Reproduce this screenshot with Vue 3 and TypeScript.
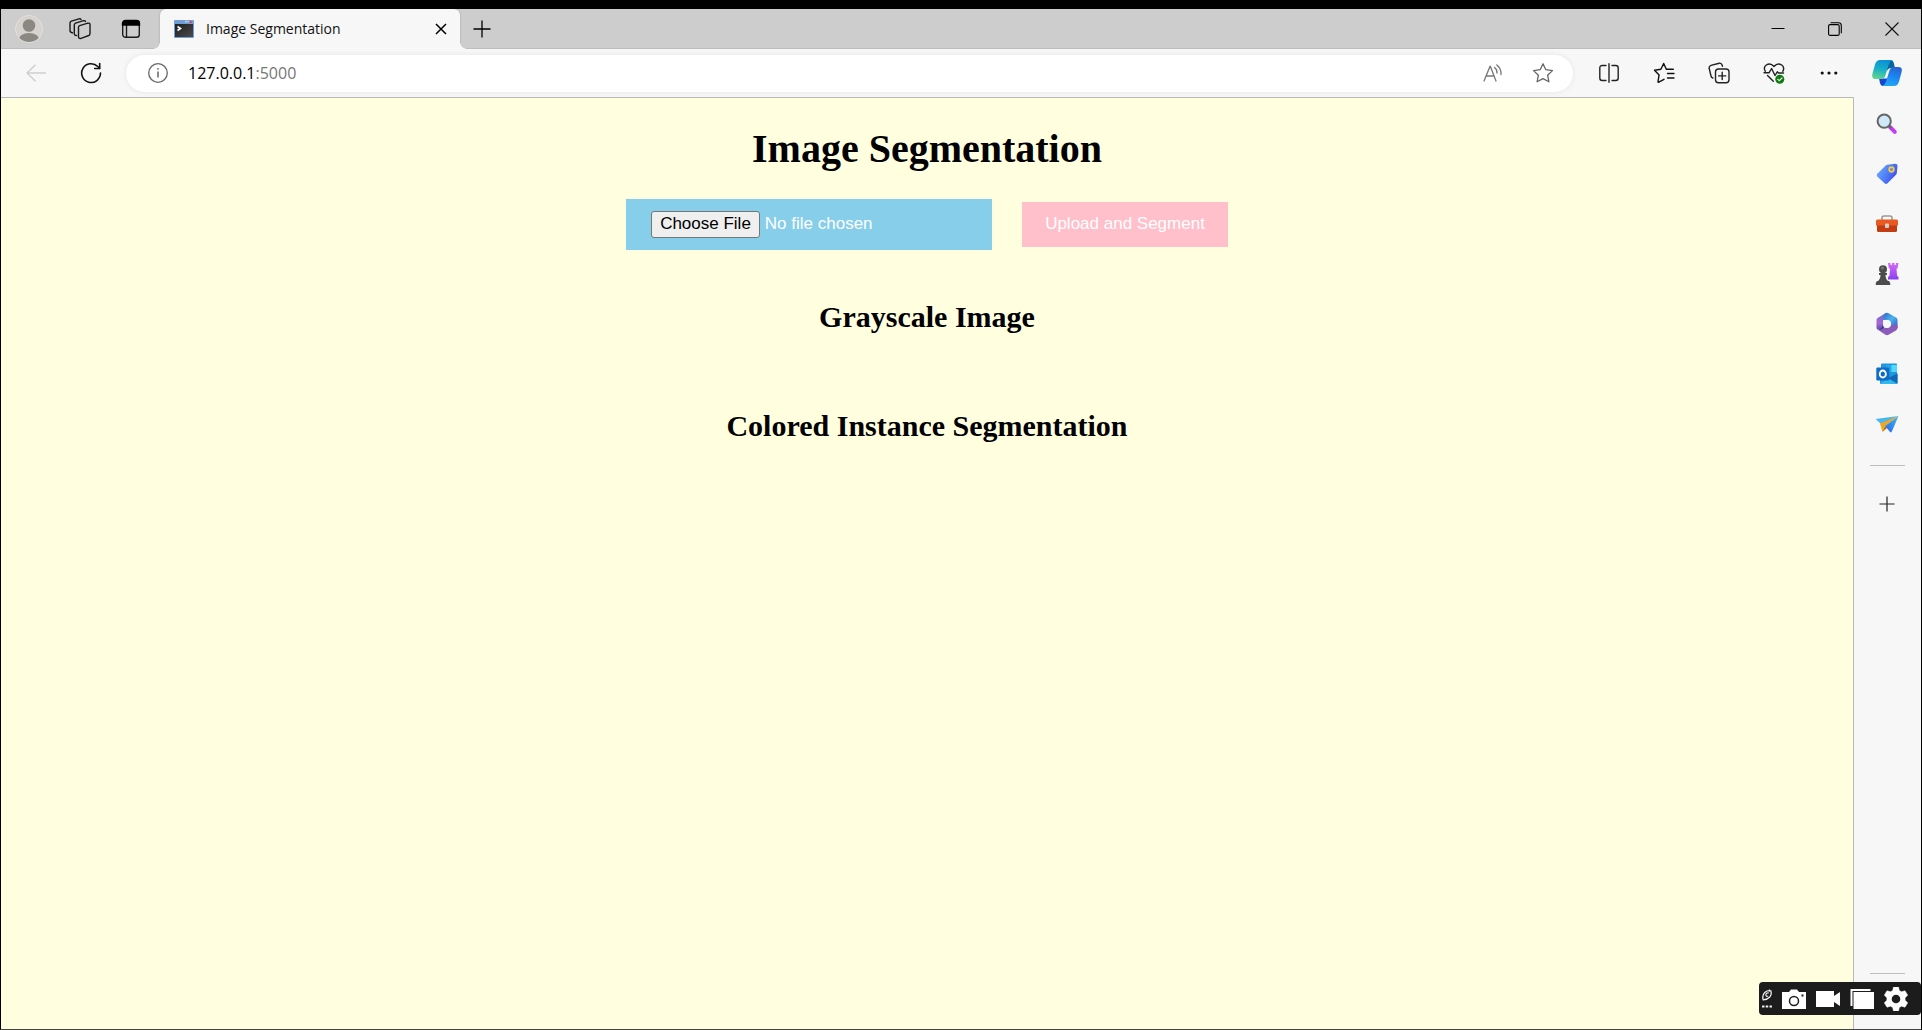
<script setup lang="ts">
import { ref } from 'vue'

const tabTitle = ref('Image Segmentation')
const host = ref('127.0.0.1')
const port = ref(':5000')
</script>

<template>
  <div class="window">
    <header class="strip">
      <button class="strip-btn" aria-label="Profile">
        <svg width="28" height="28" viewBox="0 0 28 28">
          <defs><clipPath id="avatar"><circle cx="14" cy="14" r="13" /></clipPath></defs>
          <circle cx="14" cy="14" r="13.5" fill="#d6d3cf" stroke="#e4e0dc" />
          <g fill="#8b8783" clip-path="url(#avatar)">
            <circle cx="14" cy="10.500" r="6.300" />
            <ellipse cx="14" cy="25" rx="10.500" ry="7" />
          </g>
        </svg>
      </button>
      <button class="strip-btn" aria-label="Workspaces">
        <svg width="22" height="22" viewBox="0 0 22 22" fill="none" stroke="#1b1b1b" stroke-width="1.400" stroke-linejoin="round" stroke-linecap="round">
          <path d="M9.500 9.200 Q9.500 8 10.700 7.600 L18.800 5.200 Q21 4.700 21 6.800 V15.500 Q21 17 19.800 17.500 L12 20.300 Q9.500 21 9.500 18.500Z" />
          <path d="M7.500 17.500 Q5.300 17.600 5.300 15.500 V7 Q5.300 5.700 6.500 5.200 L14.500 2.700 Q16 2.400 16.500 3.400" />
          <path d="M3.500 14.800 Q1 14.500 1 12.500 V5 Q1 3.700 2.300 3.100 L10 .9 Q11.500 .6 12 1.400" />
        </svg>
      </button>
      <button class="strip-btn" aria-label="Tab actions">
        <svg width="20" height="20" viewBox="0 0 20 20" fill="none" stroke="#1b1b1b" stroke-width="1.400">
          <rect x="1.700" y="1.700" width="16.600" height="16.600" rx="2.800" />
          <path d="M5.500 6V18" />
          <path d="M1.500 6V4.500a3 3 0 0 1 3-3h11a3 3 0 0 1 3 3V6z" fill="#000" stroke="#000" />
        </svg>
      </button>

      <div class="tab">
        <svg class="favicon" width="20" height="18" viewBox="0 0 20 18">
          <defs>
            <linearGradient id="term" x1="0" y1="0" x2="1" y2="1">
              <stop offset="0" stop-color="#1e1e1e" /><stop offset="1" stop-color="#4b4b4b" />
            </linearGradient>
          </defs>
          <rect width="20" height="18" rx="1" fill="#6f9ed6" />
          <rect x="1" y="4" width="18" height="13" fill="url(#term)" />
          <path d="M11 1.500h2M13.500 1.500h1.500" stroke="#b9d3f0" stroke-width="1.500" />
          <path d="M15.500 2h2.500" stroke="#e0524a" stroke-width="2" />
          <path d="M3.500 6.500L6.500 8.500L3.500 10.500" stroke="#fff" stroke-width="1.600" fill="none" />
        </svg>
        <span class="tab-title">{{ tabTitle }}</span>
        <button class="tab-close" aria-label="Close tab">
          <svg width="12" height="12" viewBox="0 0 12 12" stroke="#000" stroke-width="1.500"><path d="M1 1L11 11M11 1L1 11" /></svg>
        </button>
      </div>
      <button class="new-tab" aria-label="New tab">
        <svg width="18" height="18" viewBox="0 0 18 18" stroke="#000" stroke-width="1.300"><path d="M9 .5V17.500M.5 9H17.500" /></svg>
      </button>

      <div class="controls">
        <button aria-label="Minimize">
          <svg width="14" height="14" viewBox="0 0 14 14" stroke="#000"><path d="M.5 6.500H13.500" /></svg>
        </button>
        <button aria-label="Restore">
          <svg width="14" height="14" viewBox="0 0 14 14" fill="none" stroke="#000" stroke-width="1.100">
            <rect x=".6" y="2.600" width="10.600" height="10.800" rx="1.500" />
            <path d="M2.600 .7H10.500Q13.300 .7 13.300 3.500V11.200" />
          </svg>
        </button>
        <button aria-label="Close">
          <svg width="14" height="14" viewBox="0 0 14 14" stroke="#111" stroke-width="1.100"><path d="M.5 .5L13.500 13.500M13.500 .5L.5 13.500" /></svg>
        </button>
      </div>
    </header>

    <nav class="toolbar">
      <button class="tool" aria-label="Back" disabled>
        <svg width="20" height="18" viewBox="0 0 20 18" fill="none" stroke="#cfcfcf" stroke-width="1.500"><path d="M20 9H1M9.500 .7L1 9L9.500 17.300" /></svg>
      </button>
      <button class="tool" aria-label="Refresh">
        <svg width="22" height="22" viewBox="0 0 22 22" fill="none" stroke="#111" stroke-width="1.600" stroke-linecap="round" stroke-linejoin="round">
          <path d="M20.500 11A9.400 9.400 0 1 1 17.800 4.500L19.500 6.300" /><path d="M19.700 1.500V6.500H14.700" />
        </svg>
      </button>

      <div class="address">
        <button class="info" aria-label="View site information">
          <svg width="20" height="20" viewBox="0 0 20 20" fill="none" stroke="#666" stroke-width="1.300">
            <circle cx="10" cy="10" r="9.300" /><path d="M10 8.500V14.500" stroke-width="1.500" /><circle cx="10" cy="5.800" r=".9" fill="#666" stroke="none" />
          </svg>
        </button>
        <label class="url">
          <input v-model="host" class="host" type="text" aria-label="Address" /><span class="port">{{ port }}</span>
        </label>
        <button class="inner" aria-label="Read aloud">
          <svg width="20" height="18" viewBox="0 0 20 18" fill="none" stroke="#777" stroke-width="1.300" stroke-linecap="round">
            <path d="M1 17L7 2.500H7.400L13 17M3 12H11" />
            <path d="M11.500 3.500Q14.200 5.500 14 9" /><path d="M13.800 .9Q18.500 4.500 18 10.500" />
          </svg>
        </button>
        <button class="inner" aria-label="Add to favorites">
          <svg width="22" height="22" viewBox="0 0 22 22" fill="none" stroke="#666" stroke-width="1.300" stroke-linejoin="round">
            <path d="M11 1.800L13.800 7.700L20.500 8.600L15.600 13.200L16.900 19.800L11 16.600L5.100 19.800L6.400 13.200L1.500 8.600L8.200 7.700Z" />
          </svg>
        </button>
      </div>

      <button class="tool" aria-label="Split screen">
        <svg width="20" height="20" viewBox="0 0 20 20" fill="none" stroke="#222" stroke-width="1.400" stroke-linecap="round">
          <path d="M7 2.500H3.200Q.8 2.500 .8 5V15Q.8 17.500 3.200 17.500H7M13 2.500H16.800Q19.200 2.500 19.200 5V15Q19.200 17.500 16.800 17.500H13M10 .7V19.300" />
        </svg>
      </button>
      <button class="tool" aria-label="Favorites">
        <svg width="22" height="22" viewBox="0 0 22 22" fill="none" stroke="#111" stroke-width="1.400" stroke-linejoin="round" stroke-linecap="round">
          <path d="M20.300 7.200H13.300L10.700 1.500L7.900 7.200L1.500 8.200L6.100 12.900L5 19.600Q4.900 20.600 5.800 20.200L11 17.300" />
          <path d="M14.500 11.500H21M14.500 16H21" />
        </svg>
      </button>
      <button class="tool" aria-label="Collections">
        <svg width="22" height="22" viewBox="0 0 22 22" fill="none" stroke="#222" stroke-width="1.400" stroke-linecap="round">
          <path d="M4.800 16Q3.300 15.500 3 14L1.200 6.500Q.7 4.200 3 3.400L11.200 1.200Q13.500 .8 14.200 3.200L14.500 4.200" />
          <rect x="7.500" y="7" width="13.500" height="13.800" rx="3" /><path d="M14.200 10.300V17.500M10.600 13.900H17.800" />
        </svg>
      </button>
      <button class="tool" aria-label="Browser essentials">
        <svg width="22" height="22" viewBox="0 0 22 22" fill="none" stroke="#222" stroke-width="1.400" stroke-linejoin="round" stroke-linecap="round">
          <path d="M2.300 9.300Q0 5.500 3.300 3Q7.500 .6 11 4.500Q14.500 .6 18.700 3Q22 5.500 19.800 9.300" />
          <path d="M1 10.800H6L8.600 6.500L12 13.500L14.300 9.800L15.500 11H20.500" /><path d="M4.500 13.500L10.300 19.300" />
          <circle cx="16.800" cy="17.200" r="4.500" fill="#107c10" stroke="none" /><path d="M14.800 17.300L16.300 18.700L19 16" stroke="#fff" stroke-width="1.100" />
        </svg>
      </button>
      <button class="tool" aria-label="Settings and more">
        <svg width="18" height="4" viewBox="0 0 18 4" fill="#111"><circle cx="2.200" cy="2" r="1.600" /><circle cx="9" cy="2" r="1.600" /><circle cx="15.800" cy="2" r="1.600" /></svg>
      </button>
      <button class="copilot" aria-label="Copilot">
        <svg width="30" height="28" viewBox="0 0 30 28">
          <defs>
            <linearGradient id="cpA" x1=".6" y1="0" x2=".4" y2="1"><stop offset="0" stop-color="#0b8fd6" /><stop offset=".5" stop-color="#17b0c8" /><stop offset="1" stop-color="#5fd48c" /></linearGradient>
            <linearGradient id="cpB" x1=".7" y1="0" x2=".4" y2="1"><stop offset="0" stop-color="#2a62d0" /><stop offset=".5" stop-color="#1b86f0" /><stop offset="1" stop-color="#22a6f6" /></linearGradient>
          </defs>
          <path d="M7 19.500H15.800L14 24Q13 27 10.500 27Q8.500 26.800 8 24Z" fill="#1747d1" />
          <path d="M14 1H18.500Q21 1 21.800 4L23 9H18.500Q16.500 9 15 11.500Z" fill="#08649c" />
          <path d="M8 1H19.500Q17.500 2.500 16.700 5.500L13.300 16.800Q12.300 20 8.500 20H3.500Q-.8 20 .5 14.500L3 5.500Q4.300 1 8 1Z" fill="url(#cpA)" />
          <path d="M22 27H10.500Q13 26 14 22.500L17.500 11.500Q18.500 8 22 8H26.500Q31 8 29.500 13.500L27 22.500Q25.700 27 22 27Z" fill="url(#cpB)" />
        </svg>
      </button>
    </nav>

    <div class="body">
      <main class="page">
        <h1>Image Segmentation</h1>
        <form class="upload" @submit.prevent>
          <input class="file" type="file" aria-label="Image file" />
          <button class="submit" type="submit">Upload and Segment</button>
        </form>
        <h2>Grayscale Image</h2>
        <h2>Colored Instance Segmentation</h2>
      </main>

      <aside class="sidebar">
        <button aria-label="Search">
          <svg width="22" height="22" viewBox="0 0 22 22">
            <path d="M14 14L18.800 18.800" stroke="#c23cf4" stroke-width="4" stroke-linecap="round" />
            <path d="M12.500 12.500L15 15" stroke="#666" stroke-width="2.500" />
            <circle cx="8.200" cy="8.200" r="6.600" fill="#cfe9fb" stroke="#666" stroke-width="2" />
          </svg>
        </button>
        <button aria-label="Shopping">
          <svg width="22" height="22" viewBox="0 0 22 22">
            <defs><linearGradient id="tag" x1="0" y1=".3" x2="1" y2=".8"><stop offset="0" stop-color="#6ea6fb" /><stop offset=".5" stop-color="#4c7df6" /><stop offset="1" stop-color="#3f3bf0" /></linearGradient></defs>
            <path d="M11.500 1.700L19 .8Q21.500 .6 21.500 3L20.800 10Q20.700 11 20 11.700L11.500 20.300Q10 21.700 8.500 20.300L1.300 13.500Q0 12 1.300 10.700L9.700 2.500Q10.500 1.800 11.500 1.700Z" fill="url(#tag)" />
            <circle cx="15.500" cy="6.500" r="2.300" fill="#7b83c9" stroke="#f7ce45" stroke-width="1.700" />
          </svg>
        </button>
        <button aria-label="Tools">
          <svg width="24" height="20" viewBox="0 0 24 20">
            <path d="M7 6V4Q7 2 9 2H15Q17 2 17 4V6" fill="none" stroke="#999" stroke-width="1.600" />
            <rect x="1" y="5.500" width="22" height="6.500" rx="1.500" fill="#e85a20" />
            <path d="M2 11.500H22V16.500Q22 18 20.500 18H3.500Q2 18 2 16.500Z" fill="#c43d12" />
            <rect x="10" y="9.500" width="4" height="4.500" rx="1" fill="#d0d0d0" />
          </svg>
        </button>
        <button aria-label="Games">
          <svg width="24" height="24" viewBox="0 0 24 24">
            <defs><linearGradient id="rook" x1="0" y1="0" x2="0" y2="1"><stop offset="0" stop-color="#d76bf8" /><stop offset="1" stop-color="#8a3ff0" /></linearGradient></defs>
            <path d="M13 1H15.500V3H17V1H19.500V3H21V1H23.500L22.500 6.500H21.500L22 13.500L23.500 15V17.500H13V15L14.500 13.500L15 6.500H13.800Z" fill="url(#rook)" />
            <g fill="#4c4c4c"><circle cx="8" cy="7.300" r="4" /><path d="M4 11H12V13H10.500Q10.500 17 13.500 19.500H2.500Q5.500 17 5.500 13H4Z" /><path d="M2 19H14L15.200 21V23H.8V21Z" /></g>
            <circle cx="7.500" cy="6" r="1.500" fill="#777" />
          </svg>
        </button>
        <button aria-label="Microsoft 365">
          <svg width="22" height="24" viewBox="0 0 22 24">
            <defs>
              <linearGradient id="mA" x1="0" y1="0" x2="0" y2="1"><stop offset="0" stop-color="#696bd2" /><stop offset=".6" stop-color="#a868cf" /><stop offset="1" stop-color="#5f4bb0" /></linearGradient>
              <linearGradient id="mB" x1="0" y1="0" x2="1" y2="1"><stop offset="0" stop-color="#2c66c4" /><stop offset=".5" stop-color="#4cb4ee" /><stop offset="1" stop-color="#2e55c6" /></linearGradient>
              <linearGradient id="mC" x1="0" y1="1" x2="1" y2="0"><stop offset="0" stop-color="#8f5fc0" /><stop offset="1" stop-color="#8a58b4" /></linearGradient>
            </defs>
            <path d="M11 1L7 8L7.500 13V18L1.500 17.500Q.5 17 .5 15.500V8Q.5 6.500 2 5.800L9 1.500Z" fill="url(#mA)" />
            <path d="M9 1.400Q11 .2 13 1.400L20 5.600Q21.500 6.500 21.500 8V16L15 13Q15 8 11 8H7Q7 3 9 1.400Z" fill="url(#mB)" />
            <path d="M1.500 17.500Q5 19 8 15.500H12L15 13L21.500 13V16Q21.500 17.500 20 18.400L13 22.600Q11 23.800 9 22.600Z" fill="url(#mC)" />
            <path d="M2 17.500Q6 17.500 7 12L8 15.500Q5 19 2 17.500Z" fill="#2b3c8f" />
            <circle cx="11" cy="12" r="4" fill="#f7f7f7" />
          </svg>
        </button>
        <button aria-label="Outlook">
          <svg width="22" height="22" viewBox="0 0 22 22">
            <rect x="5" y=".5" width="16" height="12" rx="1" fill="#1f96de" /><path d="M10 2H16V9H10Z" fill="#28a8ea" /><path d="M15.500 2H21V9H15.500Z" fill="#50d9ff" />
            <path d="M4 10H14L21.500 11V20Q21.500 21 20.500 21H5Q4 21 4 20Z" fill="#1a9ae2" /><path d="M21.500 10.500V20.500L12 15Z" fill="#1268b4" /><path d="M4 20.500L12 15.500L21 21H5Z" fill="#31b9f0" />
            <rect x=".3" y="4.500" width="13" height="13" rx="1.200" fill="#0f6cc4" /><ellipse cx="6.800" cy="11" rx="3.100" ry="3.500" fill="none" stroke="#fff" stroke-width="1.800" />
          </svg>
        </button>
        <button aria-label="Drop">
          <svg width="24" height="18" viewBox="0 0 24 18">
            <defs><linearGradient id="drop" x1="1" y1="0" x2="0" y2="1"><stop offset="0" stop-color="#45b6f2" /><stop offset="1" stop-color="#2368e8" /></linearGradient></defs>
            <path d="M.5 4L23.500 1L6 9Z" fill="#46b7f0" /><path d="M5 8.500L23.500 1L10 11L7.500 17Z" fill="#f3a51c" /><path d="M10 11L7.500 17L12 13Z" fill="#b96c0e" />
            <path d="M23.500 1L10 11L15.500 17.500Q16.500 17.500 17.500 15Z" fill="url(#drop)" />
          </svg>
        </button>
        <hr class="rule" />
        <button aria-label="Customize">
          <svg width="16" height="16" viewBox="0 0 16 16" stroke="#222" stroke-width="1.200"><path d="M8 .5V15.500M.5 8H15.500" /></svg>
        </button>
        <hr class="rule last" />
      </aside>
    </div>

    <div class="recorder">
      <svg width="10" height="20" viewBox="0 0 10 20" fill="none" stroke="#eee">
        <path d="M1.200 10.800Q-.2 6 3 3.200Q5.500 1.200 8.800 1.800Q10 5.500 7.800 8Q5.500 10.500 1.200 10.800Z" stroke-width="1.300" />
        <path d="M6.800 4Q4 3.500 3.800 6Q4 8 6.200 7M7.500 2.500V.5" stroke-width="1.200" />
        <path d="M0 17.500H2.500M3.700 17.500H6.200M7.500 17.500H10" stroke-width="2" />
      </svg>
      <button aria-label="Screenshot">
        <svg width="24" height="20" viewBox="0 0 24 20"><path d="M0 3H7L9 .5H15L17 3H24V20H0Z" fill="#fff" /><circle cx="12" cy="12" r="4.500" fill="none" stroke="#1c1c1c" stroke-width="1.500" /><path d="M19.500 6.500H21.500" stroke="#1c1c1c" stroke-width="2" /></svg>
      </button>
      <button aria-label="Record video">
        <svg width="24" height="16" viewBox="0 0 24 16" fill="#fff"><path d="M0 0H18V5L24 1V15L18 11V16H0Z" /></svg>
      </button>
      <button aria-label="Gallery">
        <svg width="24" height="20" viewBox="0 0 24 20" fill="#fff"><path d="M.5 0H20.500V2H2.500V17H.5Z" /><path d="M3.500 3H24V20H3.500Z" /></svg>
      </button>
      <button aria-label="Recorder settings">
        <svg width="24" height="24" viewBox="0 0 24 24">
          <path d="M9.500 0H14.500L15.300 3.500L17.500 4.800L21 3.800L23.700 8.200L21.100 10.700V13.300L23.700 15.800L21 20.200L17.500 19.200L15.300 20.500L14.500 24H9.500L8.700 20.500L6.500 19.200L3 20.200L.3 15.800L2.900 13.300V10.700L.3 8.200L3 3.800L6.500 4.800L8.700 3.500Z" fill="#fff" stroke="#fff" stroke-width=".5" stroke-linejoin="round" />
          <circle cx="12" cy="12" r="4.300" fill="#1c1c1c" />
        </svg>
      </button>
    </div>
  </div>
</template>

<style>
body {
  margin: 0;
}
</style>

<style scoped>
.window {
  position: relative;
  box-sizing: border-box;
  min-height: 100vh;
  display: flex;
  flex-direction: column;
  border: 1px solid #000;
  border-top-width: 9px;
  border-bottom-color: #444;
  background: #f7f7f7;
  font-family: "Open Sans", "Noto Sans", sans-serif;
}
button {
  display: flex;
  align-items: center;
  justify-content: center;
  padding: 0;
  border: 0;
  background: none;
  font: inherit;
}
svg {
  flex: none;
}
.strip {
  display: flex;
  height: 40px;
  padding-left: 2px;
  background: #cdcdcd;
  box-shadow: inset 0 -1px #bdbdbd;
}
.strip-btn {
  width: 51px;
}
.tab {
  position: relative;
  box-sizing: border-box;
  display: flex;
  align-items: center;
  width: 300px;
  margin-left: 4px;
  padding: 0 11px 0 14px;
  border-radius: 6px 6px 0 0;
  background: #f7f7f7;
  box-shadow: 0 0 2px #999;
  clip-path: inset(0 -6px 0 -6px);
}
.tab::before,
.tab::after {
  content: "";
  position: absolute;
  bottom: 0;
  width: 6px;
  height: 6px;
}
.tab::before {
  right: 100%;
  background: radial-gradient(circle at 0 0, transparent 5px, #f7f7f7 6px);
}
.tab::after {
  left: 100%;
  background: radial-gradient(circle at 100% 0, transparent 5px, #f7f7f7 6px);
}
.tab-title {
  flex: 1;
  margin-left: 12px;
  color: #111;
  font-size: 14px;
  line-height: 20px;
}
.tab-close {
  width: 16px;
}
.new-tab {
  width: 43px;
}
.controls {
  display: flex;
  margin-left: auto;
  padding-right: 1px;
}
.controls button {
  width: 57px;
}
.toolbar {
  display: flex;
  align-items: center;
  height: 48px;
  padding: 0 3px 0 7px;
}
.tool {
  width: 55px;
  height: 40px;
}
.copilot {
  width: 62px;
  height: 40px;
}
.address {
  flex: 1;
  display: flex;
  align-items: center;
  height: 37px;
  margin: 0 8px;
  padding: 0 5px 0 22px;
  border-radius: 19px;
  background: #fff;
  box-shadow: 0 0 5px #e4e4e4;
}
.url {
  flex: 1;
  display: flex;
  align-items: center;
  margin-left: 20px;
  font-size: 16px;
  line-height: 24px;
}
.host {
  field-sizing: content;
  padding: 0;
  border: 0;
  outline: 0;
  background: none;
  color: #000;
  font: inherit;
}
.port {
  color: #767676;
}
.inner {
  width: 50px;
  height: 36px;
}
.body {
  flex: 1;
  display: flex;
}
.page {
  flex: 1;
  border-top: 1px solid #b9b9b9;
  border-right: 1px solid #b9b9b9;
  background: #ffffe0;
  color: #000;
  font-family: "Liberation Serif", "Times New Roman", serif;
  text-align: center;
}
h1 {
  margin: 28px 0;
  font-size: 40px;
  line-height: 45px;
}
.upload {
  display: flex;
  align-items: center;
  justify-content: center;
  gap: 30px;
  margin-bottom: 50px;
  font-family: "Liberation Sans", Arial, sans-serif;
  font-size: 17px;
}
.file {
  box-sizing: border-box;
  width: 366px;
  height: 51px;
  padding: 12px 25px;
  background: #87ceeb;
  color: #fff;
  font: inherit;
}
.file::file-selector-button {
  box-sizing: border-box;
  height: 27px;
  margin: 0 5px 0 0;
  padding: 0 8px 2px;
  border: 1px solid #767676;
  border-radius: 3px;
  background: #efefef;
  color: #000;
  font: inherit;
}
.submit {
  height: 45px;
  padding: 0 23px 2px;
  background: #ffc0cb;
  color: #fff;
}
h2 {
  margin: 0 0 75px;
  font-size: 30px;
  line-height: 34px;
}
.sidebar {
  box-sizing: border-box;
  display: flex;
  flex-direction: column;
  align-items: center;
  width: 67px;
  padding: 2px 1px 0 0;
}
.sidebar button {
  width: 50px;
  height: 50px;
}
.rule {
  width: 35px;
  height: 1px;
  margin: 16px 0 13px;
  border: 0;
  background: #bdbdbd;
}
.last {
  margin: auto 0 55px;
}
.recorder {
  position: absolute;
  right: 0;
  bottom: 14px;
  box-sizing: border-box;
  display: flex;
  align-items: center;
  gap: 10px;
  height: 33px;
  padding: 0 13px 0 3px;
  border-radius: 4px;
  background: #1c1c1c;
}
</style>
